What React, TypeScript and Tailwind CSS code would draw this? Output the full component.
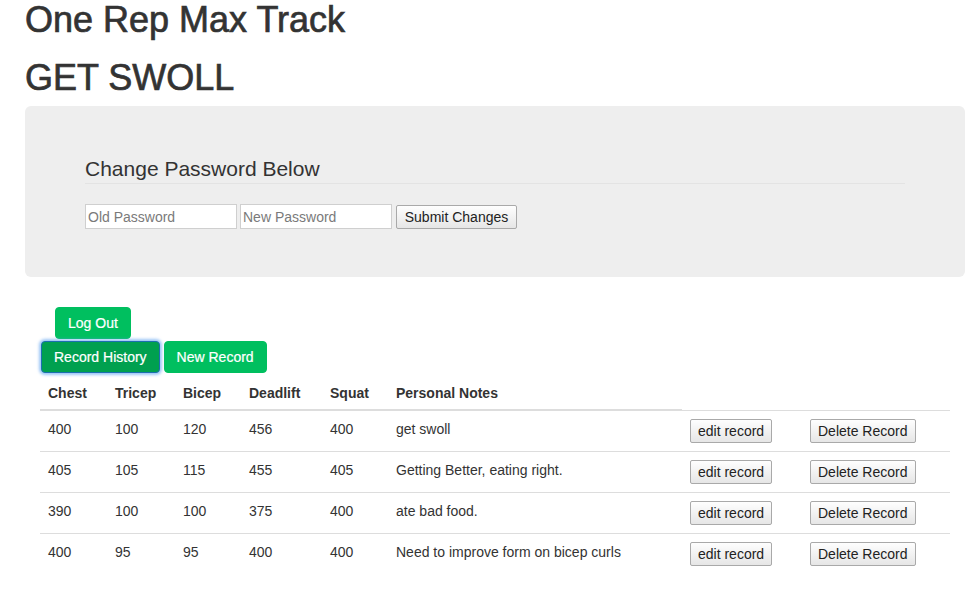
import React from 'react'

type Row = {
  chest: number
  tricep: number
  bicep: number
  deadlift: number
  squat: number
  notes: string
}

const records: Row[] = [
  { chest: 400, tricep: 100, bicep: 120, deadlift: 456, squat: 400, notes: 'get swoll' },
  { chest: 405, tricep: 105, bicep: 115, deadlift: 455, squat: 405, notes: 'Getting Better, eating right.' },
  { chest: 390, tricep: 100, bicep: 100, deadlift: 375, squat: 400, notes: 'ate bad food.' },
  { chest: 400, tricep: 95, bicep: 95, deadlift: 400, squat: 400, notes: 'Need to improve form on bicep curls' },
]

const plainBtn =
  'h-[24px] px-[7px] border border-[#a9a9a9] rounded-[2px] bg-linear-to-b from-[#fefefe] to-[#e6e6e6] text-[14px] leading-[20px] text-[#222]'

const greenBtn =
  'h-[32px] px-3 border border-[#00bf5f] rounded-[4px] bg-[#00bf5f] text-white text-[14px] leading-5 [-webkit-text-stroke:0.2px_white]'

function PasswordPanel() {
  return (
    <div className="w-[940px] mt-[8px] rounded-[6px] bg-[#eeeeee] px-[60px] py-[48px]">
      <div className="text-[21px] leading-[29px] text-[#333] border-b border-[#e3e3e3] mb-[20px]">
        Change Password Below
      </div>
      <div className="flex items-center">
        <input
          type="password"
          placeholder="Old Password"
          className="w-[152px] h-[25px] mr-[3px] px-[2px] bg-white border border-[#cfcfcf] text-[14px] placeholder:text-[#7a7a7a] outline-none"
        />
        <input
          type="password"
          placeholder="New Password"
          className="w-[152px] h-[25px] mr-[4px] px-[2px] bg-white border border-[#cfcfcf] text-[14px] placeholder:text-[#7a7a7a] outline-none"
        />
        <button className={plainBtn + ' w-[121px] mt-[1px]'}>Submit Changes</button>
      </div>
    </div>
  )
}

function RecordTable() {
  const th = 'px-2 pt-[10px] pb-[6px] text-left font-bold align-bottom border-b-2 border-[#dddddd] leading-5'
  const td = 'p-2 align-top border-t border-[#dddddd] leading-5'
  return (
    <table className="w-[910px] table-fixed border-collapse text-[14px] text-[#333]">
      <colgroup>
        <col className="w-[67px]" />
        <col className="w-[68px]" />
        <col className="w-[66px]" />
        <col className="w-[81px]" />
        <col className="w-[66px]" />
        <col className="w-[294px]" />
        <col className="w-[120px]" />
        <col className="w-[148px]" />
      </colgroup>
      <thead>
        <tr>
          <th className={th}>Chest</th>
          <th className={th}>Tricep</th>
          <th className={th}>Bicep</th>
          <th className={th}>Deadlift</th>
          <th className={th}>Squat</th>
          <th className={th}>Personal Notes</th>
        </tr>
      </thead>
      <tbody>
        {records.map((r, i) => (
          <tr key={i}>
            <td className={td}>{r.chest}</td>
            <td className={td}>{r.tricep}</td>
            <td className={td}>{r.bicep}</td>
            <td className={td}>{r.deadlift}</td>
            <td className={td}>{r.squat}</td>
            <td className={td}>{r.notes}</td>
            <td className={td}>
              <button className={plainBtn}>edit record</button>
            </td>
            <td className={td}>
              <button className={plainBtn}>Delete Record</button>
            </td>
          </tr>
        ))}
      </tbody>
    </table>
  )
}

export default function App() {
  return (
    <div
      className="min-h-screen bg-white pl-[25px] text-[#333] text-[14px]"
      style={{ fontFamily: '"Liberation Sans", Arial, sans-serif' }}
    >
      <h1 className="text-[36px] leading-[40px] font-normal [-webkit-text-stroke:0.7px_#333]">One Rep Max Track</h1>
      <h1 className="text-[36px] leading-[40px] font-normal mt-[18px] [-webkit-text-stroke:0.7px_#333]">GET SWOLL</h1>

      <PasswordPanel />

      <div className="ml-[15px]">
        <div className="mt-[30px] ml-[15px]">
          <button className={greenBtn}>Log Out</button>
        </div>
        <div className="flex gap-[4px] mt-[2px] ml-[1px]">
          <button className={greenBtn + ' !bg-[#00a04f] !border-[#1b6fae] shadow-[0_0_3px_2px_rgba(90,160,240,0.6)]'}>
            Record History
          </button>
          <button className={greenBtn}>New Record</button>
        </div>
        <RecordTable />
      </div>
    </div>
  )
}
